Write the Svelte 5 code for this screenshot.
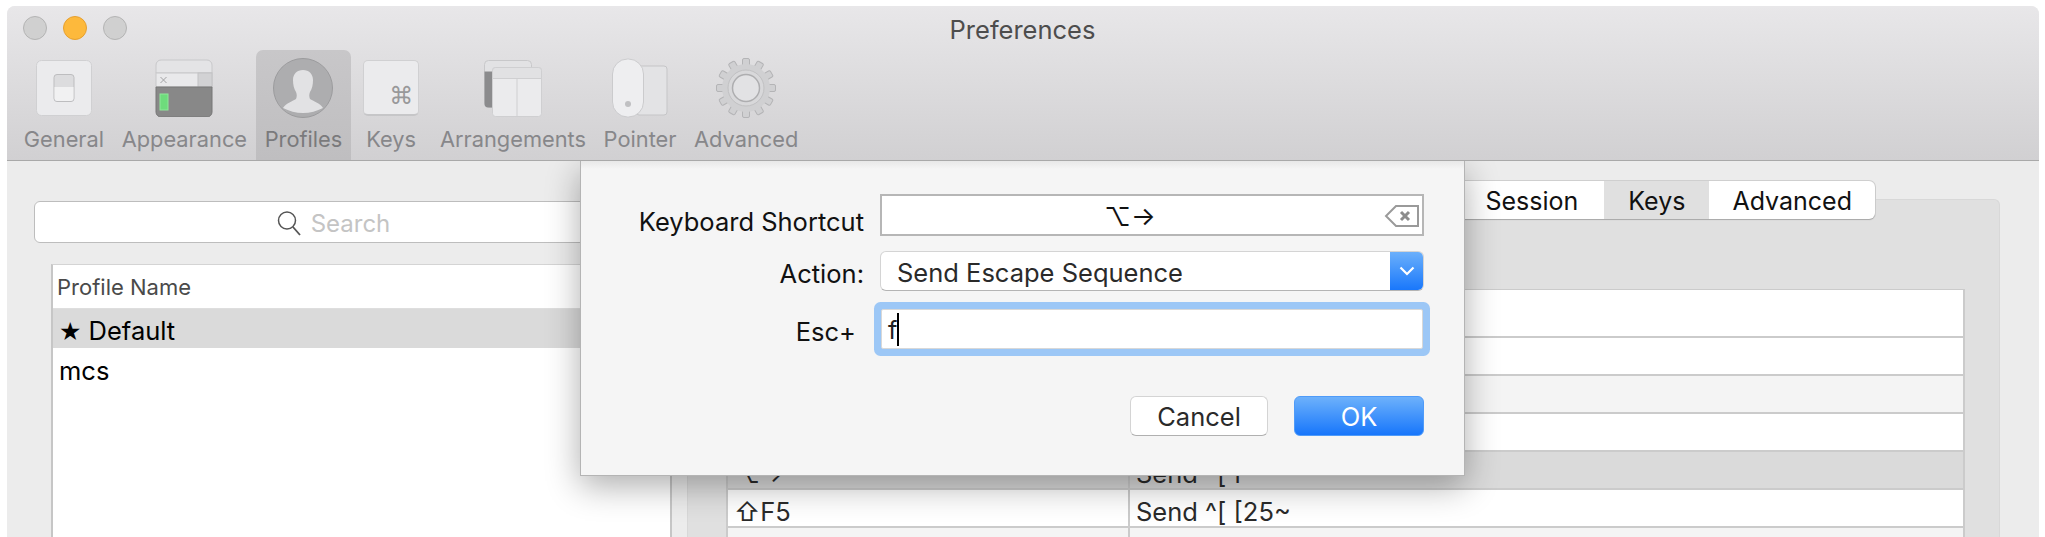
<script lang="ts">
	const tools = ['General', 'Appearance', 'Profiles', 'Keys', 'Arrangements', 'Pointer', 'Advanced']
	const tabs = ['Session', 'Keys', 'Advanced']
	const teeth = Array.from({ length: 12 }, (_, i) => i * 30)
	// rows behind the sheet have no visible text
	const rows = [
		{ key: '', action: '', kind: 'head' },
		{ key: '', action: '', kind: '' },
		{ key: '', action: '', kind: 'alt' },
		{ key: '', action: '', kind: '' },
		{ key: '⌥→', action: 'Send ^[ f', kind: 'sel' },
		{ key: '⇧F5', action: 'Send ^[ [25~', kind: '' },
		{ key: '', action: '', kind: 'alt' }
	]
</script>

<div class="window">
	<header class="toolbar">
		<div class="titlerow">
			<div class="lights">
				<span class="light"></span>
				<span class="light min"></span>
				<span class="light"></span>
			</div>
			<div class="title">Preferences</div>
		</div>
		<nav class="tools">
			{#each tools as tool}
				<div class="tool" class:active={tool === 'Profiles'} class:narrow={tool === 'Keys'}>
					<div class="icon">
						{#if tool === 'General'}
							<svg width="58" height="58" viewBox="0 0 58 58">
								<rect x="1.500" y="1.500" width="55" height="55" rx="5" fill="#ebebed" stroke="#d0d0d2" />
								<rect x="19" y="15.500" width="20" height="27" rx="3" fill="#dcdcde" stroke="#bdbdbf" />
								<path d="M19.500 28h19v11a3 3 0 0 1-3 3h-13a3 3 0 0 1-3-3z" fill="#f1f1f2" />
							</svg>
						{:else if tool === 'Appearance'}
							<svg width="58" height="58" viewBox="0 0 58 58">
								<path d="M1 6a5 5 0 0 1 5-5h46a5 5 0 0 1 5 5v8H1z" fill="#e4e4e6" stroke="#c8c8ca" />
								<rect x="1" y="14" width="56" height="14" fill="#e9e9eb" stroke="#c8c8ca" />
								<rect x="43" y="14" width="14" height="14" fill="#d2d2d4" stroke="#c2c2c4" />
								<path d="M5.500 18l6 6m0-6l-6 6" stroke="#a2a2a4" fill="none" />
								<path d="M1 28h56v25a5 5 0 0 1-5 5H6a5 5 0 0 1-5-5z" fill="#888888" stroke="#777" />
								<rect x="5" y="35" width="8" height="16" fill="#6edc7c" stroke="#8fe89a" />
							</svg>
						{:else if tool === 'Profiles'}
							<svg width="60" height="60" viewBox="0 0 60 60">
								<circle cx="30" cy="30" r="29.500" fill="#adadaf" stroke="#9b9b9d" />
								<path d="M30 12c6 0 10 4 10 10 0 5-1 9-3 12-1 2-1 5 0 7 3 2 10 4 13 9-6 3-13 5-20 5s-14-2-20-5c3-5 10-7 13-9 1-2 1-5 0-7-2-3-3-7-3-12 0-6 4-10 10-10z" fill="#e2e2e4" />
							</svg>
						{:else if tool === 'Keys'}
							<div class="keycap"><span>⌘</span></div>
						{:else if tool === 'Arrangements'}
							<svg width="60" height="58" viewBox="0 0 60 58">
								<rect x="1.500" y="1.500" width="47" height="47" rx="4" fill="#e2e2e4" stroke="#c8c8ca" />
								<path d="M1.500 12.500h9v36h-5a4 4 0 0 1-4-4z" fill="#8b8b8d" />
								<rect x="9.500" y="8.500" width="49" height="49" rx="3" fill="#ebebed" stroke="#cfcfd1" />
								<path d="M9.500 11.500a3 3 0 0 1 3-3h43a3 3 0 0 1 3 3v8h-49z" fill="#e1e1e3" stroke="#cfcfd1" />
								<path d="M34 20v37" stroke="#cfcfd1" />
							</svg>
						{:else if tool === 'Pointer'}
							<svg width="58" height="60" viewBox="0 0 58 60">
								<rect x="25" y="8" width="31" height="49" rx="3" fill="#e3e3e5" stroke="#c5c5c7" />
								<rect x="1.500" y="1" width="31" height="58" rx="15" fill="#eeeef0" stroke="#cbcbcd" />
								<circle cx="17" cy="46" r="3" fill="#c0c0c2" />
							</svg>
						{:else}
							<svg width="62" height="62" viewBox="0 0 62 62">
								{#each teeth as angle}
									<rect x="27.500" y="1.500" width="7" height="12" rx="1.500" fill="#d0d0d2" stroke="#b4b4b6" transform="rotate({angle} 31 31)" />
								{/each}
								<circle cx="31" cy="31" r="24" fill="#d0d0d2" />
								<circle cx="31" cy="31" r="18" fill="#d8d8da" stroke="#c0c0c2" />
								<circle cx="31" cy="31" r="13.500" fill="#e2e2e4" stroke="#aeaeb0" stroke-width="1.500" />
							</svg>
						{/if}
					</div>
					<span class="label">{tool}</span>
				</div>
			{/each}
		</nav>
	</header>

	<main class="content">
		<section class="left">
			<div class="search">
				<svg width="26" height="26" viewBox="0 0 26 26">
					<circle cx="11" cy="10.500" r="8.500" fill="none" stroke="#555" stroke-width="1.500" />
					<path d="M17 17l7 8" stroke="#555" stroke-width="1.800" />
				</svg>
				<span>Search</span>
			</div>
			<div class="list">
				<div class="listhead">Profile Name</div>
				<div class="listrow selected"><span class="star">★</span> Default</div>
				<div class="listrow">mcs</div>
			</div>
		</section>

		<section class="right">
			<div class="tabs">
				{#each tabs as tab, i}
					<div class="tab" class:on={i === 1}>{tab}</div>
				{/each}
			</div>
			<div class="panel">
				<div class="table">
					{#each rows as row}
						<div class="row {row.kind}">
							<div class="cell">{row.key}</div>
							<div class="cell actioncell">{row.action}</div>
						</div>
					{/each}
				</div>
			</div>
		</section>
	</main>

	<div class="sheet">
		<div class="form">
			<label for="shortcut" class="first">Keyboard Shortcut</label>
			<div class="shortcut" id="shortcut">
				<span class="combo">⌥→</span>
				<svg class="del" width="36" height="24" viewBox="0 0 36 24">
					<path d="M34 2H12L2 12l10 10h22z" fill="none" stroke="#9a9a9a" stroke-width="2" />
					<path d="M17 8l8 8m0-8l-8 8" stroke="#8c8c8c" stroke-width="3" />
				</svg>
			</div>
			<label for="action">Action:</label>
			<div class="popup" id="action">
				<span class="popuptext">Send Escape Sequence</span>
				<span class="arrow">
					<svg width="16" height="10" viewBox="0 0 16 10">
						<path d="M1.500 1.500L8 8l6.500-6.500" fill="none" stroke="#fff" stroke-width="2.200" />
					</svg>
				</span>
			</div>
			<label for="esc" class="esc">Esc+</label>
			<div class="escfield" id="esc"><span>f</span><i class="caret"></i></div>
		</div>
		<div class="buttons">
			<div class="btn">Cancel</div>
			<div class="btn ok">OK</div>
		</div>
	</div>
</div>

<style>
	:global(body) {
		background: #fff;
		overflow: hidden;
	}
	.window {
		position: relative;
		height: 531px;
		margin: 6px 6px 0 7px;
		overflow: hidden;
		background: #ececec;
		border-radius: 8px 8px 0 0;
		font-family: Inter, 'Liberation Sans', sans-serif;
		display: flex;
		flex-direction: column;
	}
	.toolbar {
		position: relative;
		z-index: 3;
		height: 155px;
		box-sizing: border-box;
		background: linear-gradient(#e8e7e9, #d1d0d2);
		border-bottom: 1px solid #a9a9a9;
	}
	.titlerow {
		height: 44px;
		display: grid;
		grid-template-columns: 1fr auto 1fr;
		align-items: center;
	}
	.lights {
		display: flex;
		gap: 16px;
		padding-left: 16px;
	}
	.light {
		width: 22px;
		height: 22px;
		border-radius: 50%;
		background: #d0d0d0;
		border: 1px solid #b4b4b4;
	}
	.light.min {
		background: #fdb93c;
		border-color: #e6a030;
	}
	.title {
		grid-column: 2;
		padding: 2px 1px 0 0;
		font-size: 25.500px;
		color: #4d4d4d;
	}
	.tools {
		display: flex;
		padding-left: 8px;
	}
	.tool {
		height: 110px;
		box-sizing: border-box;
		padding: 8px 8.800px 0;
		display: flex;
		flex-direction: column;
		align-items: center;
	}
	.tool.narrow {
		min-width: 80px;
	}
	.tool.active {
		background: linear-gradient(#c8c7c9, #bfbec0);
		border-radius: 7px 7px 0 0;
	}
	.icon {
		height: 60px;
		display: flex;
		align-items: center;
		justify-content: center;
	}
	.label {
		margin-top: 8px;
		font-size: 21.800px;
		line-height: 26px;
		color: #87878a;
		white-space: nowrap;
	}
	.active .label {
		color: #7a7a7c;
	}
	.keycap {
		width: 56px;
		height: 56px;
		box-sizing: border-box;
		background: #ebebed;
		border: 1px solid #d0d0d2;
		border-bottom: 2px solid #c6c6c8;
		border-radius: 5px;
		display: flex;
		align-items: flex-end;
		justify-content: flex-end;
		padding: 0 5px 5px 0;
	}
	.keycap span {
		font-family: 'DejaVu Sans', sans-serif;
		font-size: 24px;
		line-height: 26px;
		color: #98989a;
	}

	.content {
		flex: 1;
		min-height: 0;
		display: flex;
	}
	.left {
		width: 665px;
		box-sizing: border-box;
		padding: 40px 0 0 27px;
		display: flex;
		flex-direction: column;
	}
	.search {
		width: 598px;
		height: 42px;
		box-sizing: border-box;
		padding-top: 2px;
		background: #fff;
		border: 1px solid #bdbdbd;
		border-radius: 6px;
		display: flex;
		align-items: center;
		justify-content: center;
		gap: 9px;
		font-size: 24px;
		color: #c4c4c4;
	}
	.list {
		flex: 1;
		margin: 21px 0 0 17px;
		background: #fff;
		border-left: 2px solid #c6c6c6;
		border-right: 2px solid #c6c6c6;
		border-top: 1px solid #d4d4d4;
	}
	.listhead {
		height: 44px;
		box-sizing: border-box;
		padding-left: 4px;
		display: flex;
		align-items: center;
		font-size: 22px;
		color: #4a4a4a;
		border-bottom: 1px solid #dedede;
	}
	.listrow {
		height: 39px;
		padding-left: 6px;
		line-height: 44px;
		font-size: 25.500px;
		color: #000;
	}
	.listrow + .listrow {
		line-height: 46px;
	}
	.listrow.selected {
		background: #dadada;
	}
	.star {
		font-family: 'DejaVu Sans', sans-serif;
		font-size: 25px;
	}

	.right {
		flex: 1;
		min-width: 0;
		box-sizing: border-box;
		padding: 20px 39px 0 15px;
		display: flex;
		flex-direction: column;
	}
	.tabs {
		position: relative;
		z-index: 1;
		align-self: flex-end;
		margin: 0 125px -20px 0;
		height: 38px;
		display: flex;
		background: #fff;
		border-radius: 6px;
		box-shadow: 0 1px 1px #a8a8a8, 0 0 0 1px #cfcfcf;
	}
	.tab {
		padding: 0 24px;
		line-height: 41px;
		font-size: 25px;
		color: #111;
		white-space: nowrap;
	}
	.tab:first-child {
		padding: 0 26px 0 60px;
	}
	.tab:last-child {
		padding: 0 23px;
	}
	.tab.on {
		background: #e0e0e0;
	}
	.panel {
		flex: 1;
		min-height: 0;
		background: #e0e0e0;
		border: 1px solid #d8d8d8;
		border-bottom: 0;
		border-radius: 6px 6px 0 0;
		padding: 89px 34px 0 38px;
		overflow: hidden;
	}
	.table {
		border: 2px solid #cbcbcb;
		border-width: 1px 2px 0;
		background: #fff;
	}
	.row {
		display: grid;
		grid-template-columns: 400px 1fr;
		height: 38px;
		box-sizing: border-box;
		border-bottom: 2px solid #cbcbcb;
		background: #fff;
		font-size: 25.500px;
		line-height: 28px;
		color: #2a2a2a;
	}
	.row.head {
		height: 48px;
	}
	.row.alt {
		background: #f4f4f4;
	}
	.row.sel {
		background: #dadada;
	}
	.cell {
		padding: 8px 0 0 6px;
		box-sizing: border-box;
		height: 36px;
	}
	.actioncell {
		border-left: 2px solid #cbcbcb;
	}
	.head .cell {
		height: 46px;
	}

	.sheet {
		position: absolute;
		z-index: 2;
		left: 573px;
		top: 155px;
		width: 885px;
		height: 315px;
		box-sizing: border-box;
		background: linear-gradient(#e8e8e8, #f5f5f5 8px);
		border: 1px solid #b4b4b4;
		border-top: 0;
		box-shadow: 0 10px 32px rgba(0, 0, 0, 0.32);
		padding-top: 33px;
	}
	.form {
		display: grid;
		grid-template-columns: 283px 544px;
		grid-template-rows: 57px 58px 40px;
		column-gap: 16px;
		align-items: start;
		font-size: 25.500px;
		color: #111;
	}
	.form label {
		text-align: right;
		white-space: nowrap;
		line-height: 45px;
	}
	.form .first {
		line-height: 55px;
	}
	.form .esc {
		padding-right: 8px;
		line-height: 46px;
	}
	.shortcut {
		position: relative;
		height: 42px;
		box-sizing: border-box;
		background: #fff;
		border: 2px solid #b6b6b6;
		display: flex;
		align-items: center;
		justify-content: center;
	}
	.combo {
		font-size: 26px;
		color: #111;
		margin-right: 44px;
		padding-top: 2px;
	}
	.del {
		position: absolute;
		right: 2px;
		top: 8px;
	}
	.popup {
		height: 40px;
		box-sizing: border-box;
		background: #fff;
		border: 1px solid #d4d4d4;
		border-bottom-color: #b4b4b4;
		border-radius: 6px;
		display: flex;
		align-items: center;
		justify-content: space-between;
		overflow: hidden;
	}
	.popuptext {
		padding: 2px 0 0 16px;
		color: #2a2a2a;
	}
	.arrow {
		width: 33px;
		height: 40px;
		background: linear-gradient(#6db1fb, #1776fb);
		display: flex;
		align-items: center;
		justify-content: center;
	}
	.escfield {
		height: 40px;
		margin: 0 1px;
		box-sizing: border-box;
		background: #fff;
		border: 1px solid #d8d8d8;
		border-radius: 2px;
		box-shadow: 0 0 0 7px #9cc7f6;
		display: flex;
		align-items: center;
		padding-left: 6px;
		color: #222;
	}
	.caret {
		width: 2px;
		height: 33px;
		background: #000;
	}
	.buttons {
		margin-top: 47px;
		padding-right: 40px;
		display: flex;
		justify-content: flex-end;
		gap: 26px;
	}
	.btn {
		width: 138px;
		height: 40px;
		box-sizing: border-box;
		background: #fff;
		border: 1px solid #d4d4d4;
		border-bottom-color: #b0b0b0;
		border-radius: 6px;
		text-align: center;
		line-height: 40px;
		font-size: 25.500px;
		color: #2a2a2a;
	}
	.btn.ok {
		width: 130px;
		background: linear-gradient(#6db1fb, #1776fb);
		border-color: #4f9bf9;
		color: #fff;
	}
</style>
